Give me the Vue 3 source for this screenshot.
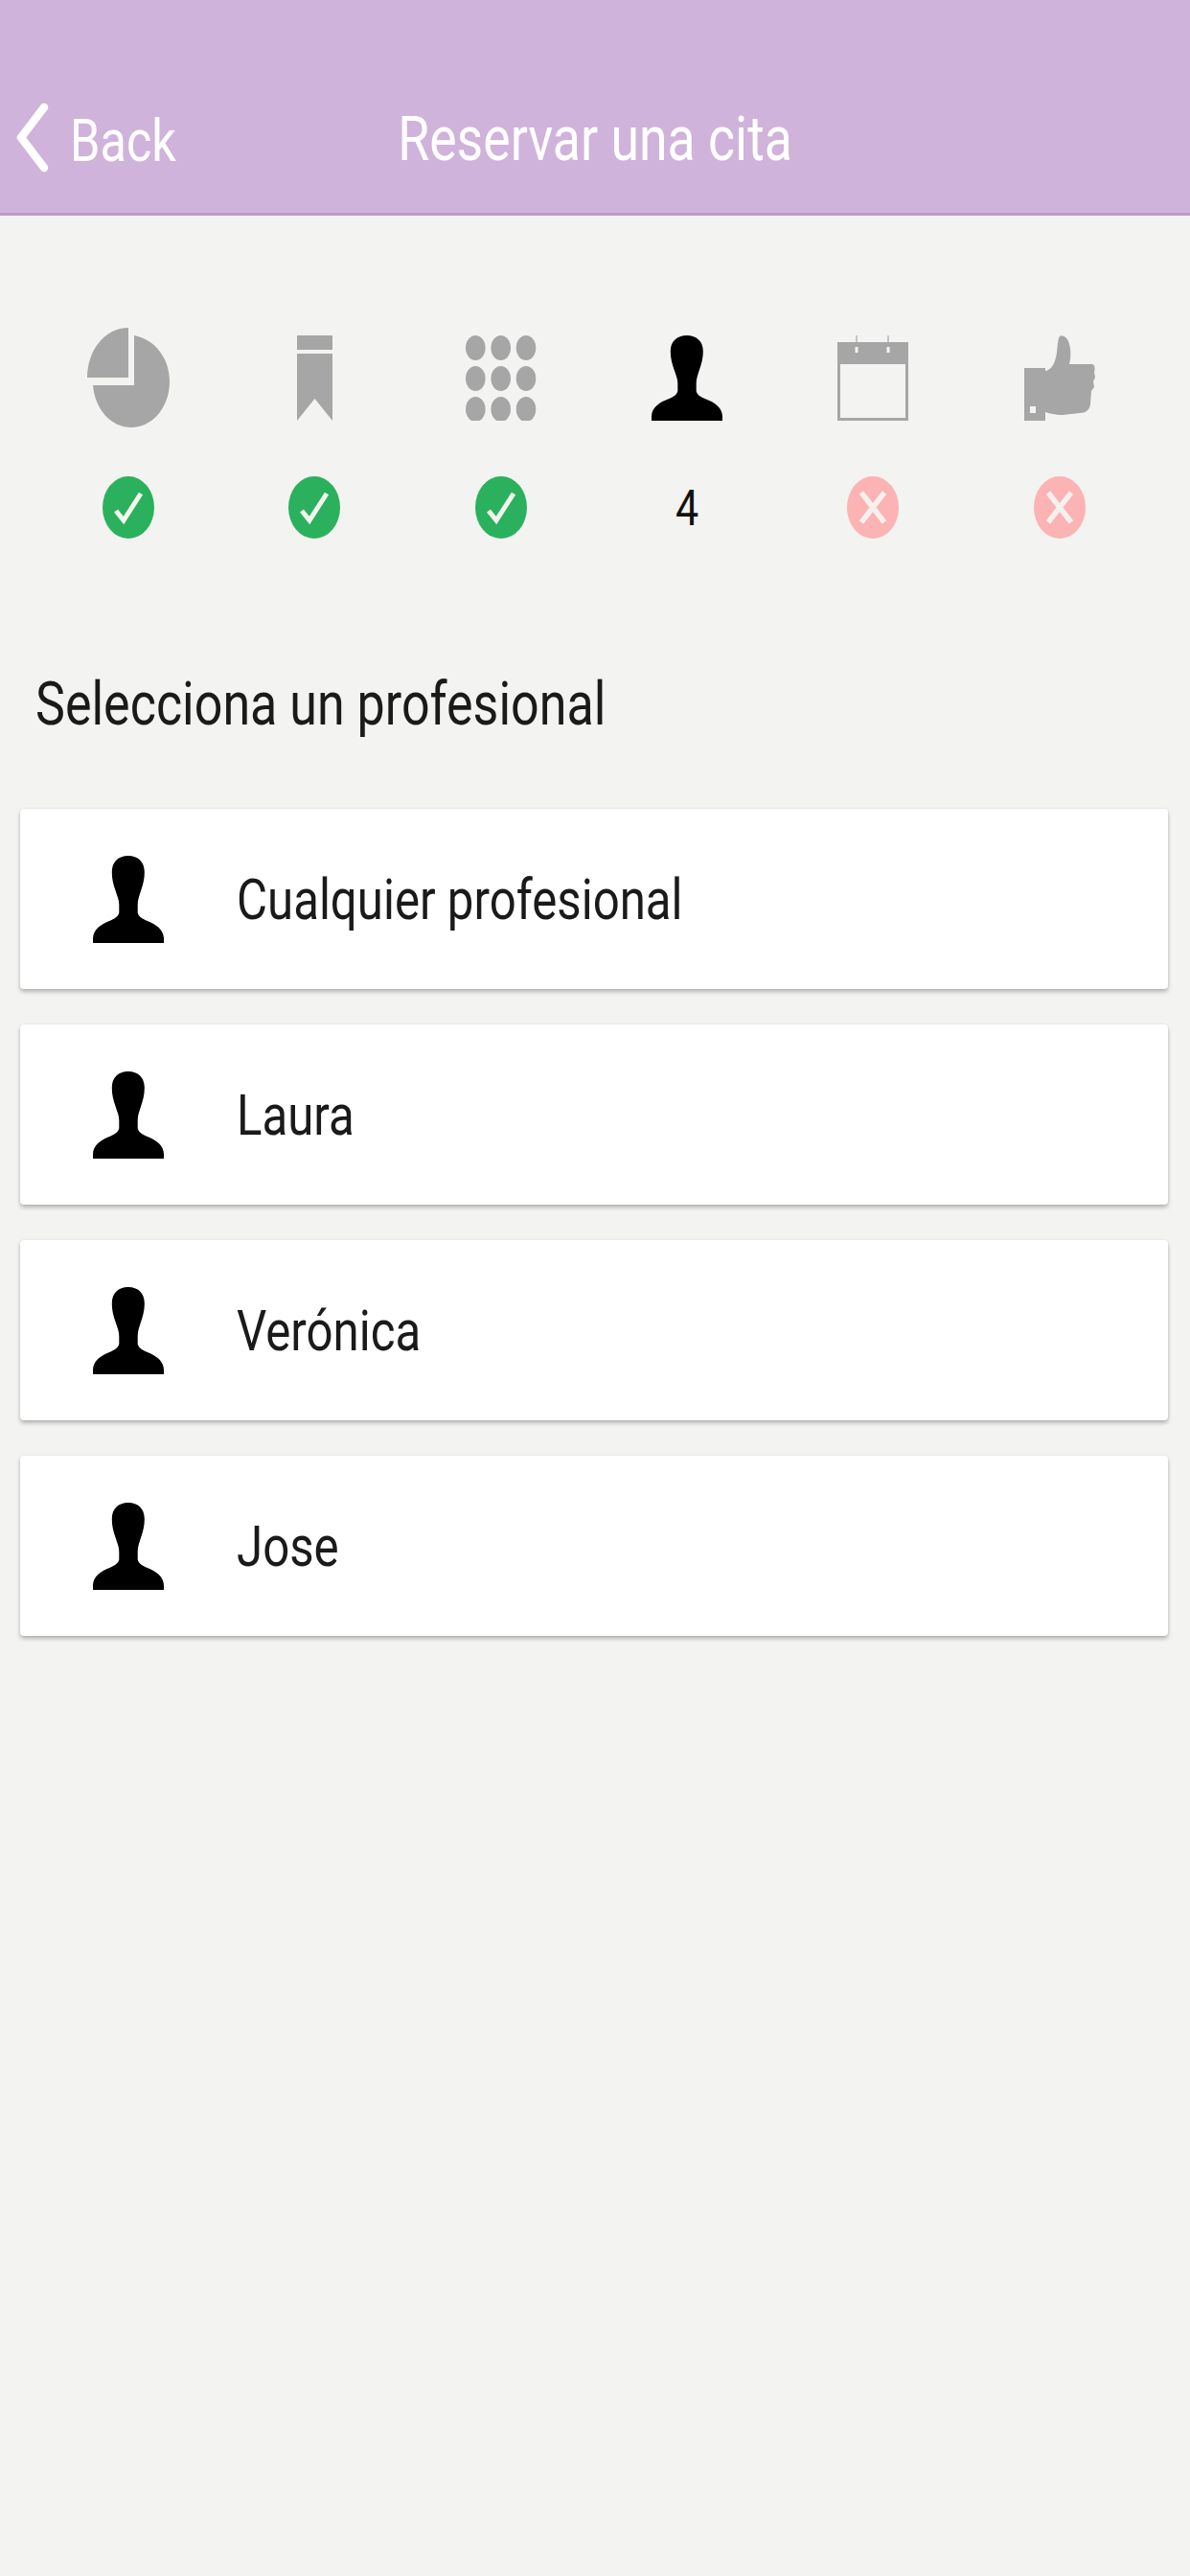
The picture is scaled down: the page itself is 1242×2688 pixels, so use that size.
<script setup>
const steps = [
  { icon: 'pie', status: 'done' },
  { icon: 'bookmark', status: 'done' },
  { icon: 'grid', status: 'done' },
  { icon: 'person', status: 'current', number: 4 },
  { icon: 'calendar', status: 'todo' },
  { icon: 'thumb', status: 'todo' }
]

const professionals = ['Cualquier profesional', 'Laura', 'Verónica', 'Jose']

const dotColumns = [10.3, 36.7, 63]
const dotRows = [13, 45, 77]

const personPath =
  'M93 0C119 0 136 18 136 48C136 70 132 85 126 105C122 120 118 130 118 145L118 168C120 180 130 186 142 192C167 202 187 220 187 245V258H0V245C0 220 20 202 45 192C57 186 67 180 69 168L69 145C69 130 64 120 60 105C54 85 50 70 50 48C50 18 67 0 93 0Z'
</script>

<template>
  <div class="page">
    <header class="topbar">
      <div class="back">
        <svg class="chevron" viewBox="0 0 35 73">
          <path d="M30 5L6 36.5L30 68" fill="none" stroke="#fff" stroke-width="8.5" stroke-linecap="round" stroke-linejoin="round" />
        </svg>
        <span class="tall back-label">Back</span>
      </div>
      <span class="tall title">Reservar una cita</span>
      <div></div>
    </header>

    <section class="steps">
      <div v-for="step in steps" :key="step.icon" class="step">
        <div class="step-icon">
          <svg v-if="step.icon === 'pie'" width="86" height="104" viewBox="0 0 86 104" fill="#a6a6a6">
            <path d="M43 0V52H0C0 23 19 0 43 0Z" />
            <path d="M49 8C70 12 86 31 86 56C86 83 68 104 46 104C25 104 8 85 6 60H49Z" />
          </svg>
          <svg v-else-if="step.icon === 'bookmark'" width="37" height="89" viewBox="0 0 37 89" fill="#a6a6a6">
            <rect width="37" height="15" />
            <path d="M0 19H37V89L18.5 66L0 89Z" />
          </svg>
          <svg v-else-if="step.icon === 'grid'" width="74" height="89" viewBox="0 0 74 89" fill="#a6a6a6">
            <template v-for="cy in dotRows" :key="cy">
              <ellipse v-for="cx in dotColumns" :key="cx" :cx="cx" :cy="cy" rx="10.3" ry="13" />
            </template>
          </svg>
          <svg v-else-if="step.icon === 'person'" width="74" height="89" viewBox="0 0 187 258" preserveAspectRatio="none">
            <path :d="personPath" fill="#000" />
          </svg>
          <svg v-else-if="step.icon === 'calendar'" width="74" height="89" viewBox="0 0 74 89">
            <path d="M0 7H74V89H0ZM3 30V86H71V30Z" fill="#a6a6a6" fill-rule="evenodd" />
            <path d="M20 0V7M53 0V7" stroke="#a6a6a6" stroke-width="1.2" />
            <path d="M20 12V18M53 12V18" stroke="#f3f3f1" stroke-width="3" />
          </svg>
          <svg v-else width="74" height="89" viewBox="0 0 74 89" fill="#a6a6a6">
            <path d="M0 34H22V37C28 36 32 30 34 18C35 10 35 4 37 1C39 -1 44 1 46 6C49 14 49 22 47 30L71 30C74 30 74 36 73 38L74 44L72 48L73 54L70 58L69 72C68 78 64 81 58 81L40 83C32 83 26 81 22 80V89H0ZM6 74V81H12V74Z" fill-rule="evenodd" />
          </svg>
        </div>

        <div class="step-status">
          <svg v-if="step.status === 'done'" width="54" height="65" viewBox="0 0 54 65">
            <ellipse cx="27" cy="32.5" rx="27" ry="32.5" fill="#2bb15d" />
            <path d="M14 36L22 46L40 18" fill="none" stroke="#f2f6ee" stroke-width="5" />
          </svg>
          <svg v-else-if="step.status === 'todo'" width="54" height="65" viewBox="0 0 54 65">
            <ellipse cx="27" cy="32.5" rx="27" ry="32.5" fill="#fcb3b3" />
            <path d="M15 17L39 48M39 17L15 48" fill="none" stroke="#f6f0ee" stroke-width="5.5" />
          </svg>
          <span v-else class="tall number">{{ step.number }}</span>
        </div>
      </div>
    </section>

    <h1 class="heading"><span class="tall">Selecciona un profesional</span></h1>

    <ul class="list">
      <li v-for="name in professionals" :key="name" class="card">
        <svg width="74" height="91" viewBox="0 0 187 258" preserveAspectRatio="none">
          <path :d="personPath" fill="#000" />
        </svg>
        <span class="tall">{{ name }}</span>
      </li>
    </ul>
  </div>
</template>

<style>
html,
body {
  margin: 0;
  background: #f3f3f1;
}
</style>

<style scoped>
.page {
  min-height: 2688px;
  background: #f3f3f1;
  font-family: Roboto, "Liberation Sans", sans-serif;
}

.tall {
  display: inline-block;
  transform: scaleY(1.21);
}

.topbar {
  box-sizing: border-box;
  height: 225px;
  padding: 107px 0 0 16px;
  display: grid;
  grid-template-columns: 1fr auto 1fr;
  align-items: start;
  background: #d0b3da;
  border-bottom: 3px solid #c197c9;
  color: #fff;
  font-size: 53.6px;
  font-weight: 400;
  line-height: 73px;
}

.back {
  display: flex;
  align-items: flex-start;
  gap: 22px;
  font-size: 50.5px;
}

.back-label {
  margin-top: 3px;
}

.chevron {
  width: 35px;
  height: 73px;
}

.title {
  margin-top: 1px;
  margin-right: 16px;
}

.steps {
  display: grid;
  grid-template-columns: repeat(6, 1fr);
  padding: 117px 39px 0 37px;
}

.step {
  display: flex;
  flex-direction: column;
  align-items: center;
}

.step-icon {
  height: 104px;
  display: flex;
  align-items: center;
  justify-content: center;
}

.step-status {
  height: 65px;
  margin-top: 51px;
  display: flex;
  align-items: center;
  justify-content: center;
}

.number {
  font-size: 43px;
  color: #111;
}

.heading {
  margin: 136px 0 0 37px;
  font-size: 52px;
  font-weight: 400;
  line-height: 74px;
  color: #1a1a1a;
}

.list {
  list-style: none;
  margin: 72px 23px 0 21px;
  padding: 0;
  display: flex;
  flex-direction: column;
  gap: 37px;
}

.card {
  box-sizing: border-box;
  height: 188px;
  padding-left: 76px;
  display: flex;
  align-items: center;
  gap: 76px;
  background: #fff;
  border-radius: 4px;
  box-shadow: 0 3px 4px rgba(0, 0, 0, 0.25), 0 0 3px rgba(0, 0, 0, 0.06);
  font-size: 49.2px;
  color: #1a1a1a;
}
</style>
